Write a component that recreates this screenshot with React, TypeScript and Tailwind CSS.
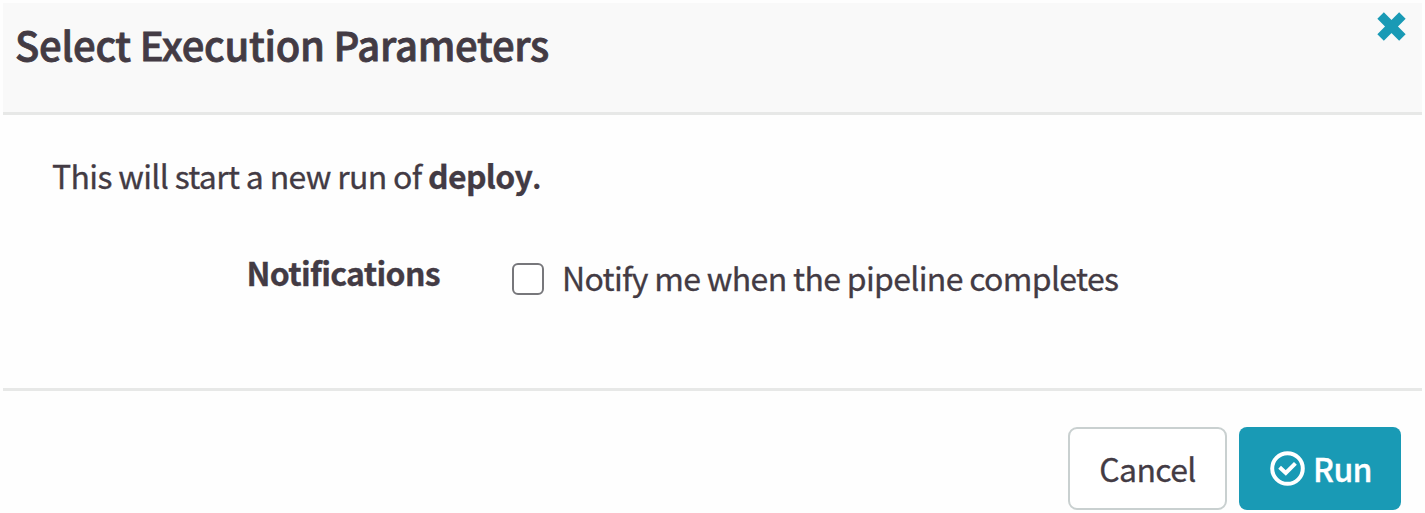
import React from "react";

function CloseIcon() {
  return (
    <svg viewBox="0 0 29 29" className="h-[29px] w-[29px]" fill="none" stroke="currentColor" strokeWidth="9.2" aria-hidden="true">
      <path d="M3.6 3.6L25.4 25.4M25.4 3.6L3.6 25.4" />
    </svg>
  );
}

function CheckCircleIcon() {
  return (
    <svg viewBox="0 0 35 35" className="h-[35px] w-[35px] shrink-0" fill="none" stroke="currentColor" strokeWidth="4" aria-hidden="true">
      <circle cx="17.5" cy="17.5" r="15.3" />
      <path d="M9.6 16.2L15.8 21.9L25.4 12.3" />
    </svg>
  );
}

export default function App() {
  return (
    <div className="h-[513px] w-full overflow-hidden bg-[#fefefe] px-[3px] pt-[3px] font-['Noto_Sans_CJK_SC',sans-serif] text-[32px] leading-[40px] tracking-[-0.67px] whitespace-nowrap text-[#433b44] [-webkit-text-stroke:0.3px]">
      <header className="flex h-[112px] items-start justify-between border-b-3 border-[#e7e8e7] bg-[#f9f9f9] pr-[16px] pl-[12px]">
        <h1 className="mt-[17px] text-[40px] leading-[48px] font-medium tracking-[-0.28px] [-webkit-text-stroke:0.8px]">
          Select Execution Parameters
        </h1>
        <button type="button" aria-label="Close" className="mt-[9px] text-[#199ab5]">
          <CloseIcon />
        </button>
      </header>
      <main className="h-[276px] border-b-3 border-[#e7e8e7] pt-[40px] pl-[49px]">
        <p>
          This will start a new run of <strong className="font-bold">deploy</strong>
          <span className="font-medium">.</span>
        </p>
        <div className="mt-[57px] flex items-start">
          <span className="w-[388px] text-right font-bold">Notifications</span>
          <label className="mt-[5px] ml-[72px] flex items-center">
            <input
              type="checkbox"
              className="mt-[4px] mr-[18px] h-[32px] w-[32px] appearance-none rounded-[6px] border-2 border-[#77777b] bg-white"
            />
            Notify me when the pipeline completes
          </label>
        </div>
      </main>
      <footer className="flex justify-end gap-[12px] pt-[36px] pr-[21px]">
        <button type="button" className="h-[83px] w-[159px] rounded-[9px] border-2 border-[#c9d0d0] bg-white pb-[2px]">
          Cancel
        </button>
        <button
          type="button"
          className="flex h-[83px] w-[162px] items-center justify-center gap-[8px] rounded-[8px] bg-[#199ab5] pl-[2px] font-medium text-white"
        >
          <CheckCircleIcon />
          <span className="pb-[2px]">Run</span>
        </button>
      </footer>
    </div>
  );
}
